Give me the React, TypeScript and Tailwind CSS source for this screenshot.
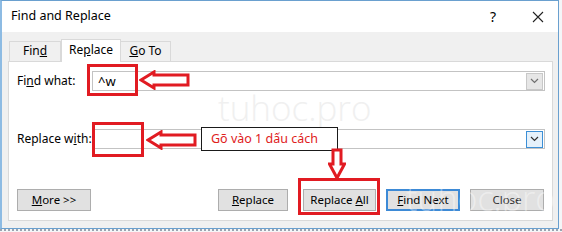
import React from 'react';

function Chevron({ color = '#606060' }: { color?: string }) {
  return (
    <svg width="9" height="6" viewBox="0 0 9 6">
      <path d="M1 1 L4.5 4.5 L8 1" fill="none" stroke={color} strokeWidth="1.2" />
    </svg>
  );
}

function ComboInput({ value, focused }: { value?: string; focused?: boolean }) {
  return (
    <div className="w-[453px] h-[20px] border border-[#c3c3c3] bg-white flex items-center justify-between pl-[5px] pr-px">
      <span className="text-[13px] leading-none">{value}</span>
      <div
        className={
          focused
            ? 'w-[17px] h-[17px] border border-[#3c8fd6] bg-[#e5f1fb] flex items-center justify-center'
            : 'w-[17px] h-[17px] border border-[#c8c8c8] bg-[#e6e6e6] flex items-center justify-center'
        }
      >
        <Chevron color={focused ? '#303030' : '#707070'} />
      </div>
    </div>
  );
}

function Btn({ children, width, primary }: { children: React.ReactNode; width: string; primary?: boolean }) {
  return (
    <div
      className={`${width} h-[22px] flex items-center justify-center text-[11.5px] bg-[#e1e1e1] ${
        primary ? 'border-2 border-[#3d8ad6]' : 'border border-[#adadad]'
      }`}
    >
      {children}
    </div>
  );
}

function LeftArrow({ w, h }: { w: number; h: number }) {
  const mid = h / 2;
  const head = 15;
  const shaft = 5;
  return (
    <svg width={w} height={h} viewBox={`0 0 ${w} ${h}`}>
      <polygon
        points={`2,${mid} ${head},2 ${head},${mid - shaft} ${w - 2},${mid - shaft} ${w - 2},${mid + shaft} ${head},${mid + shaft} ${head},${h - 2}`}
        fill="white"
        stroke="#e11b22"
        strokeWidth="3"
        strokeLinejoin="miter"
      />
    </svg>
  );
}

function DownArrow() {
  return (
    <svg width="18" height="32" viewBox="0 0 18 32">
      <polygon
        points="5,2 13,2 13,16 16.5,16 9,30 1.5,16 5,16"
        fill="white"
        stroke="#e11b22"
        strokeWidth="3"
      />
    </svg>
  );
}

export default function App() {
  return (
    <div className="w-[562px] h-[232px] bg-[#f4f6f8] relative overflow-hidden font-['Noto_Sans',sans-serif] text-black">
      <div className="w-[559px] h-[229px] border border-[#6aa0cf] border-l-2 border-l-[#8dbbe3] bg-[#f0f0f0] flex flex-col">
        {/* Title bar */}
        <div className="h-[31px] bg-white flex items-center pl-[9px] pr-[14px]">
          <span className="text-[12.5px]">Find and Replace</span>
          <span className="ml-auto text-[14px] mr-[36px]">?</span>
          <svg width="12" height="12" viewBox="0 0 12 12">
            <path d="M1 1 L11 11 M11 1 L1 11" stroke="#222" strokeWidth="1.1" />
          </svg>
        </div>

        {/* Tabs */}
        <div className="flex items-end ml-[7px] mt-[6px] h-[23px] text-[12px]">
          <div className="w-[52px] h-[20px] border border-[#d9d9d9] border-b-0 flex items-end justify-center pb-px">
            <span>Fin<u>d</u></span>
          </div>
          <div className="w-[60px] h-[23px] bg-white border border-[#d9d9d9] border-b-0 -mb-px relative z-10 flex items-end justify-center pb-[3px]">
            <span>Re<u>p</u>lace</span>
          </div>
          <div className="w-[50px] h-[20px] border border-[#d9d9d9] border-b-0 border-l-0 flex items-end justify-center pb-px">
            <span><u>G</u>o To</span>
          </div>
        </div>

        {/* Panel */}
        <div className="ml-[6px] w-[545px] h-[160px] bg-white border border-[#d9d9d9] flex flex-col pl-[8px] text-[12px]">
          <div className="flex items-center mt-[9px]">
            <span className="w-[75px]">Fi<u>n</u>d what:</span>
            <ComboInput value="^w" />
          </div>
          <div className="flex items-center mt-[38px]">
            <span className="w-[75px]">Replace w<u>i</u>th:</span>
            <ComboInput focused />
          </div>
          <div className="flex items-center mt-[40px]">
            <Btn width="w-[74px]">
              <span><u>M</u>ore &gt;&gt;</span>
            </Btn>
            <div className="ml-[127px]">
              <Btn width="w-[70px]">
                <span><u>R</u>eplace</span>
              </Btn>
            </div>
            <div className="ml-[15px]">
              <Btn width="w-[73px]">
                <span>Replace <u>A</u>ll</span>
              </Btn>
            </div>
            <div className="ml-[10px]">
              <Btn width="w-[74px]" primary>
                <span><u>F</u>ind Next</span>
              </Btn>
            </div>
            <div className="ml-[10px]">
              <Btn width="w-[74px]">
                <span className="text-[#333]">Close</span>
              </Btn>
            </div>
          </div>
        </div>
      </div>
      <div className="h-[3px] border-t-2 border-dotted border-[#9aa4b0] w-full" />

      {/* Watermarks */}
      <div className="absolute left-[218px] top-[90px] text-[35px] font-light text-[#f0f0f0] font-['Open_Sans',sans-serif] leading-none pointer-events-none">
        tuhoc.pro
      </div>
      <div className="absolute left-[406px] top-[181px] text-[34px] font-light text-white/40 font-['Open_Sans',sans-serif] leading-none pointer-events-none">
        tuhoc.pro
      </div>

      {/* Annotations */}
      <div className="absolute left-[87px] top-[64px] w-[51px] h-[32px] border-[3px] border-[#e11b22]" />
      <div className="absolute left-[139px] top-[70px]">
        <LeftArrow w={51} h={20} />
      </div>

      <div className="absolute left-[92px] top-[122px] w-[52px] h-[35px] border-[3px] border-[#e11b22]" />
      <div className="absolute left-[146px] top-[130px]">
        <LeftArrow w={51} h={20} />
      </div>
      <div className="absolute left-[201px] top-[127px] w-[137px] h-[24px] border border-[#1a1a1a] bg-white flex items-center pl-[9px] text-[12.5px] text-[#e0201b]">
        Gõ vào 1 dấu cách
      </div>

      <div className="absolute left-[328px] top-[148px]">
        <DownArrow />
      </div>
      <div className="absolute left-[298px] top-[178px] w-[82px] h-[37px] border-[3px] border-[#e11b22]" />
    </div>
  );
}
